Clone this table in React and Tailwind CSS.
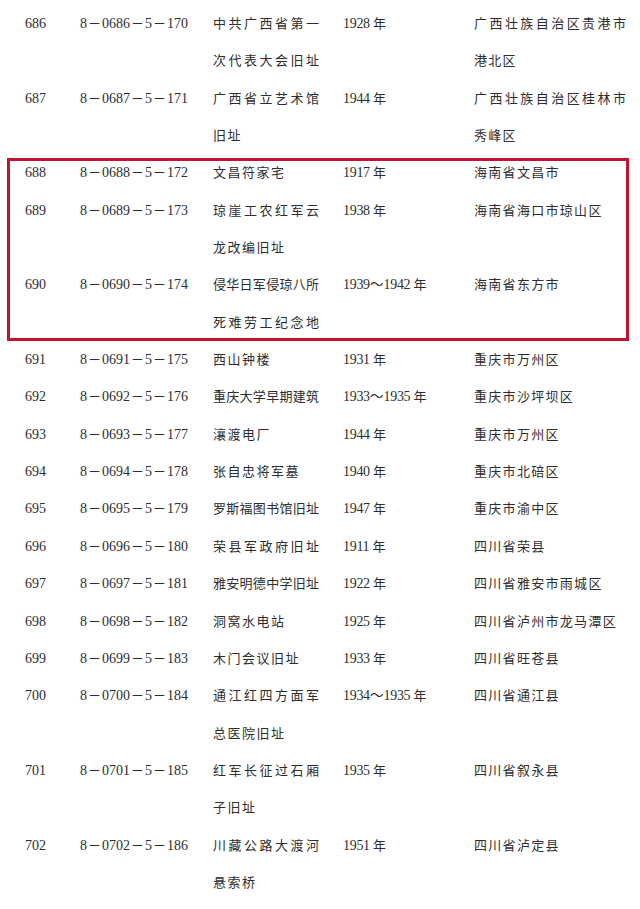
import React from "react";

const rows = [
  ["686", "170", ["中共广西省第一", "次代表大会旧址"], "1928", ["广西壮族自治区贵港市", "港北区"]],
  ["687", "171", ["广西省立艺术馆", "旧址"], "1944", ["广西壮族自治区桂林市", "秀峰区"]],
  ["688", "172", ["文昌符家宅"], "1917", ["海南省文昌市"]],
  ["689", "173", ["琼崖工农红军云", "龙改编旧址"], "1938", ["海南省海口市琼山区"]],
  ["690", "174", ["侵华日军侵琼八所", "死难劳工纪念地"], "1939～1942", ["海南省东方市"]],
  ["691", "175", ["西山钟楼"], "1931", ["重庆市万州区"]],
  ["692", "176", ["重庆大学早期建筑"], "1933～1935", ["重庆市沙坪坝区"]],
  ["693", "177", ["瀼渡电厂"], "1944", ["重庆市万州区"]],
  ["694", "178", ["张自忠将军墓"], "1940", ["重庆市北碚区"]],
  ["695", "179", ["罗斯福图书馆旧址"], "1947", ["重庆市渝中区"]],
  ["696", "180", ["荣县军政府旧址"], "1911", ["四川省荣县"]],
  ["697", "181", ["雅安明德中学旧址"], "1922", ["四川省雅安市雨城区"]],
  ["698", "182", ["洞窝水电站"], "1925", ["四川省泸州市龙马潭区"]],
  ["699", "183", ["木门会议旧址"], "1933", ["四川省旺苍县"]],
  ["700", "184", ["通江红四方面军", "总医院旧址"], "1934～1935", ["四川省通江县"]],
  ["701", "185", ["红军长征过石厢", "子旧址"], "1935", ["四川省叙永县"]],
  ["702", "186", ["川藏公路大渡河", "悬索桥"], "1951", ["四川省泸定县"]],
];

const Dash = () => <span className="text-[13px] px-[1px]">－</span>;

const Spread = ({ text, width }) => (
  <div className={`flex justify-between ${width}`}>
    {text.split("").map((c, i) => (
      <span key={i}>{c}</span>
    ))}
  </div>
);

const Row = ({ row }) => {
  const [no, seq, name, year, place] = row;
  const wrapped = place.length > 1;
  return (
    <div className="grid grid-cols-[55px_133px_130px_131px_1fr] pl-[25px] leading-[37.35px]">
      <div>{no}</div>
      <div>
        8<Dash />0{no}<Dash />5<Dash />{seq}
      </div>
      <div className="text-[13px]">
        {name.map((line, i) =>
          line.length >= 7 ? (
            <Spread key={i} text={line} width="w-[106px]" />
          ) : (
            <div key={i} className="tracking-[1.5px]">{line}</div>
          )
        )}
      </div>
      <div className="tracking-[-0.3px]">
        {year} <span className="text-[13px]">年</span>
      </div>
      <div className="text-[13px]">
        {place.map((line, i) =>
          wrapped && i === 0 ? (
            <Spread key={i} text={line} width="w-[152px]" />
          ) : (
            <div key={i} className="tracking-[1.3px]">{line}</div>
          )
        )}
      </div>
    </div>
  );
};

export default function App() {
  return (
    <div
      className="w-[640px] h-[909px] bg-white text-[14px] text-[#2e2e2e] pt-[5px] overflow-hidden"
      style={{ fontFamily: '"Liberation Serif", "Noto Sans CJK SC", serif' }}
    >
      {rows.slice(0, 2).map((r) => (
        <Row key={r[0]} row={r} />
      ))}
      <div className="relative">
        {rows.slice(2, 5).map((r) => (
          <Row key={r[0]} row={r} />
        ))}
        <div className="absolute left-[7px] right-[11px] top-[4px] bottom-0 border-[3px] border-[#c41230] pointer-events-none" />
      </div>
      {rows.slice(5).map((r) => (
        <Row key={r[0]} row={r} />
      ))}
    </div>
  );
}
